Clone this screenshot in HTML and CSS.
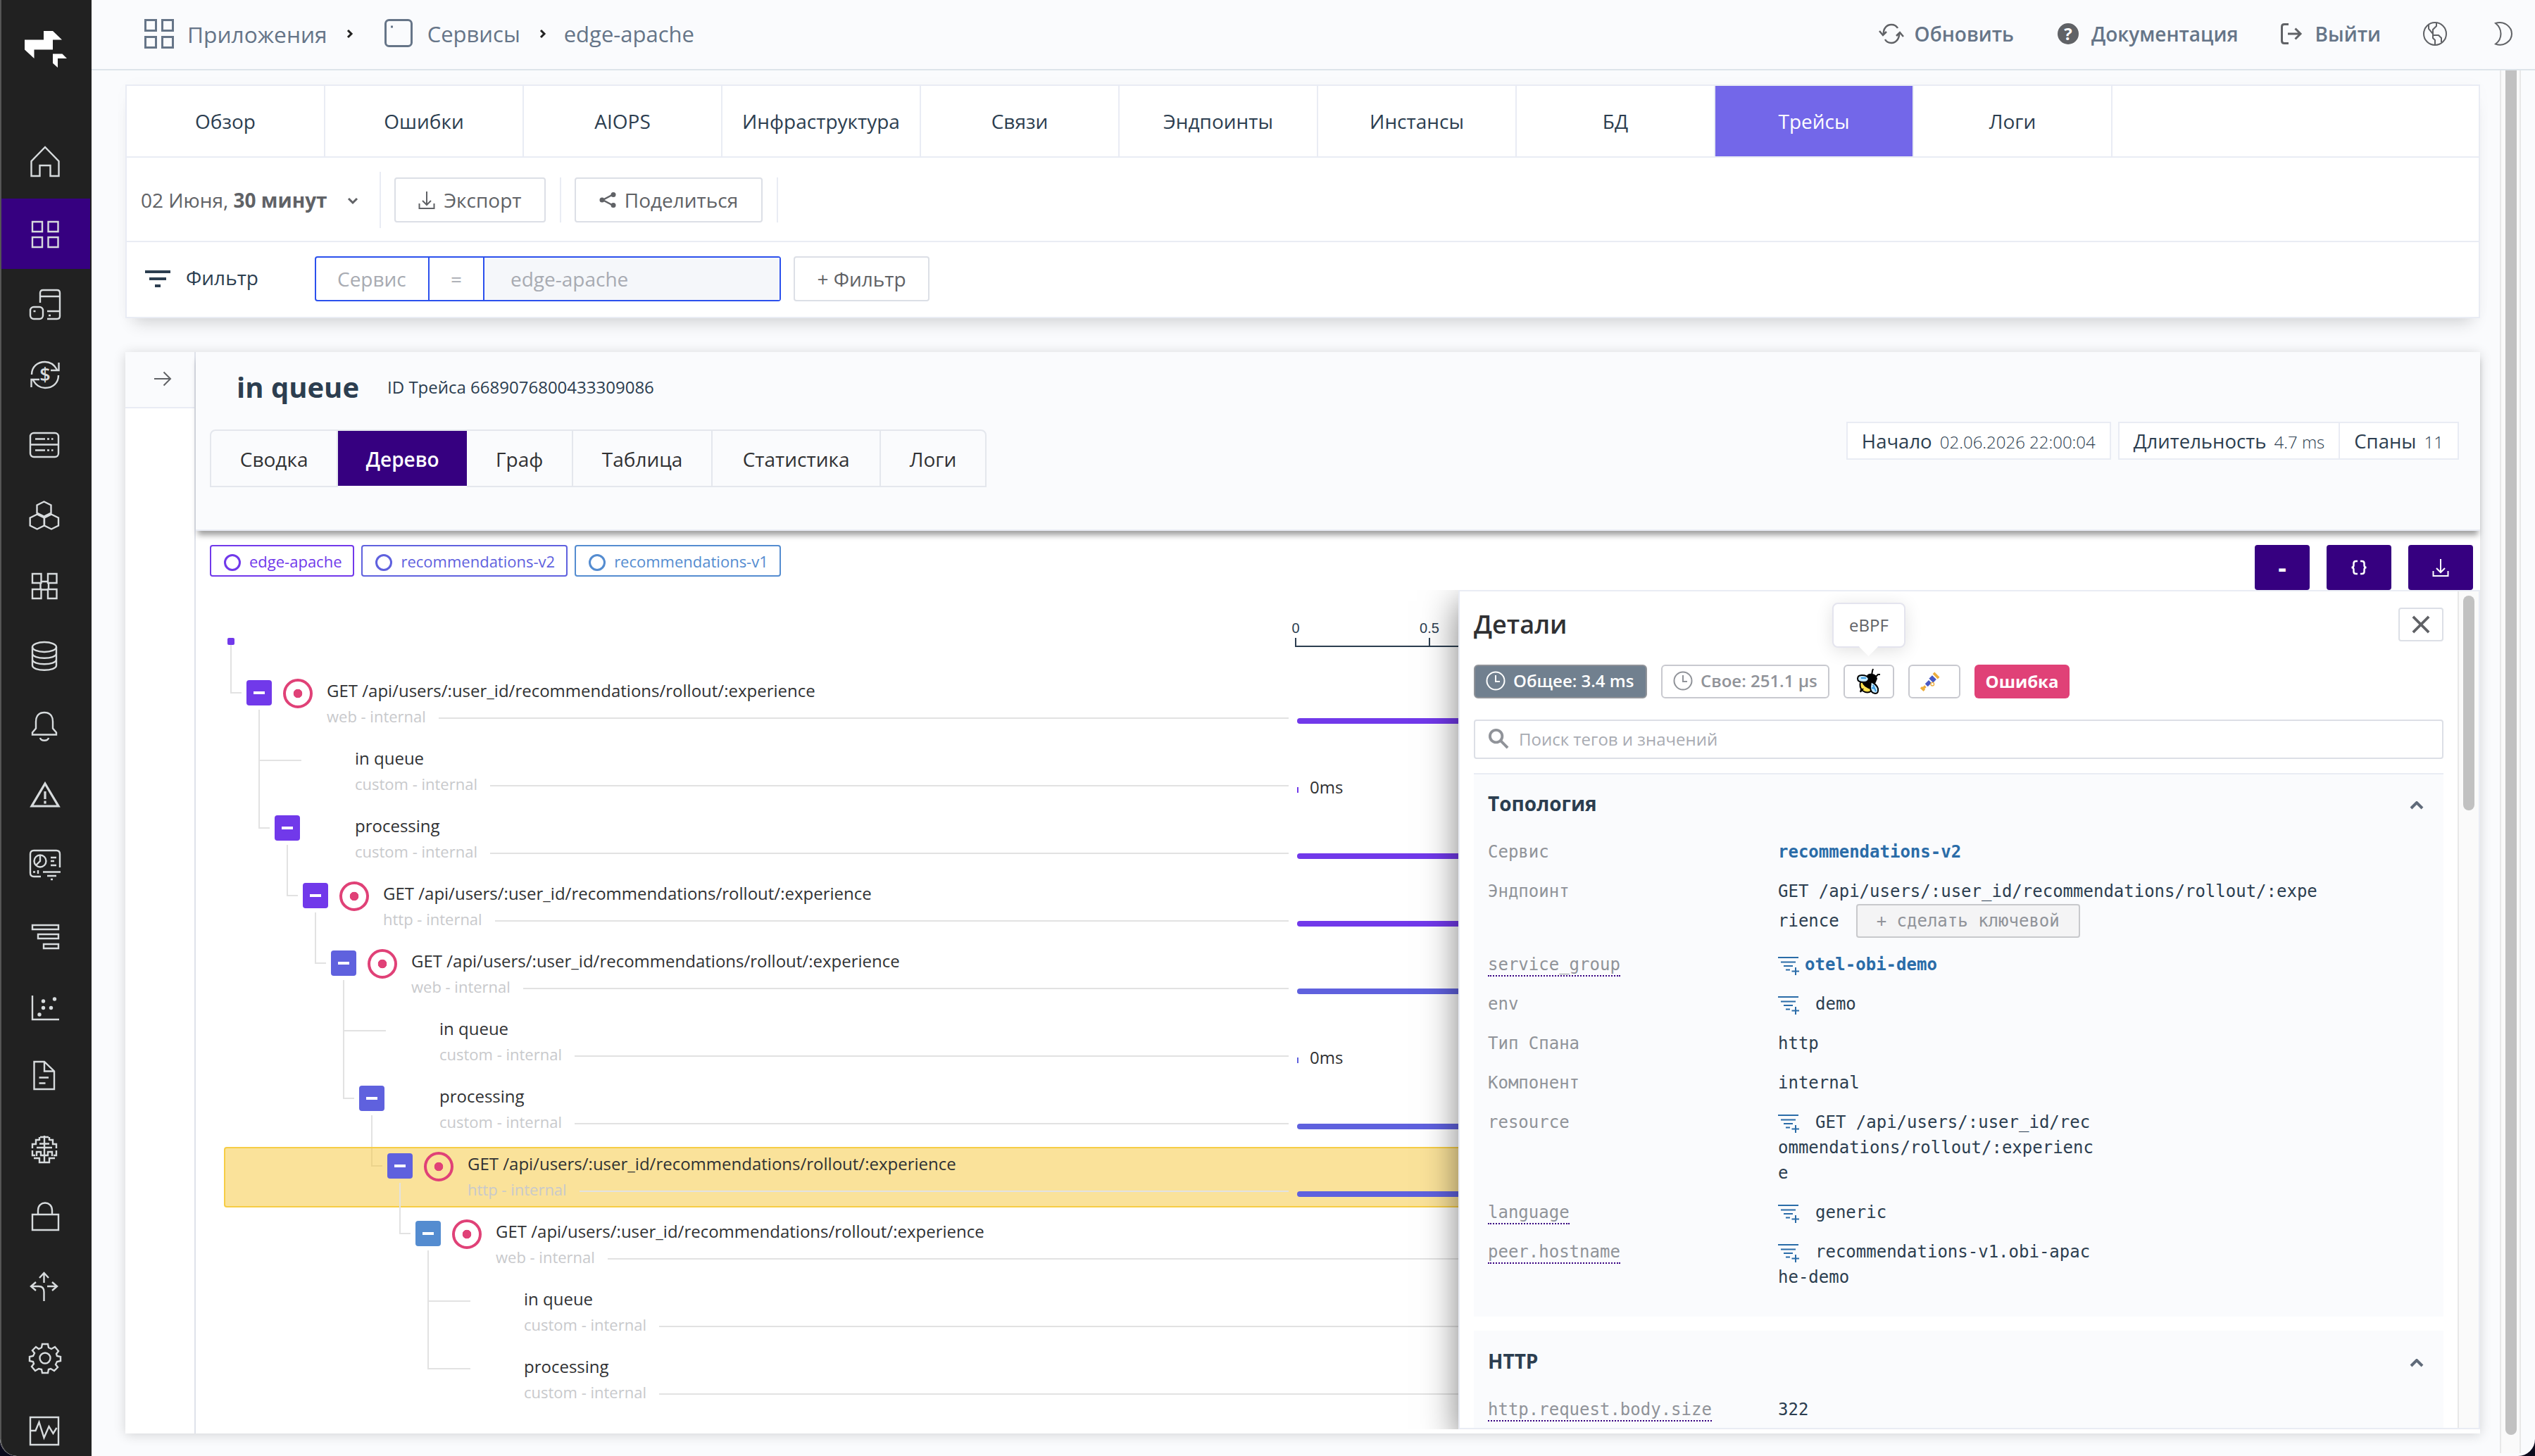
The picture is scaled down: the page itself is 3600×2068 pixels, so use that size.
FILE: index.html
```html
<!DOCTYPE html>
<html lang="ru">
<head>
  <meta charset="UTF-8">
  <meta name="viewport" content="width=device-width, initial-scale=1.0">
  <title>edge-apache - Трейсы</title>
  <link rel="stylesheet" href="styles.css">
</head>
<body>
  <!-- shared icons -->
  <svg class="defs" width="0" height="0">
    <symbol id="i-download" viewBox="0 0 24 26"><path d="M12 1v19M6 14l6 6 6-6M1.500 18v7h21v-7"/></symbol>
    <symbol id="i-clock" viewBox="0 0 28 28"><circle cx="14" cy="14" r="12.500"/><path d="M14 6v9h6"/></symbol>
    <symbol id="i-up" viewBox="0 0 20 12"><path d="M2 10l8-8 8 8"/></symbol>
    <symbol id="i-addfilter" viewBox="0 0 30 28"><path d="M0 2h29M4 8.500h21M8 14h13M11 19.500h6M25 16v11M19.500 21.500h11"/></symbol>
  </svg>

  <div class="app">
    <nav class="sidebar">
      <svg class="logo" viewBox="0 0 62 54"><path fill="#fff" d="M27 0H40L53 12.600H40V26.500H13.500V39L0 26.500V12.600H27zM40 32.500H53.500L60 39H47V52L40 45.700z"/></svg>
      <a class="nav-item"><svg viewBox="0 0 44 44"><path d="M2.500 40V19L22-1l19.500 20v21H29.500V25h-15v15z"/></svg></a>
      <a class="nav-item active"><svg viewBox="0 0 44 44"><path d="M4 5h14v14H4zM26.500 5h14v14h-14zM4 27h14v14H4zM26.500 27h14v14h-14z"/></svg></a>
      <a class="nav-item"><svg viewBox="0 0 44 44"><path d="M15 20V6q0-4 4-4h20q4 0 4 4v33q0 4-4 4H25M15 11h28M25 32h18M27 38h3M5.500 32h3"/><rect x="1" y="26" width="18" height="17" rx="5"/></svg></a>
      <a class="nav-item"><svg viewBox="0 0 44 44"><path d="M3 22C3 11 11 4 22 4c8 0 13 4 17 11M41.500 5v11H30M41 23c0 11-8 18-19 18-8 0-13-4-17-11M2.500 40V29H14"/><text class="dollar" x="22" y="32">$</text></svg></a>
      <a class="nav-item"><svg viewBox="0 0 44 44"><rect x="1" y="5" width="40" height="34" rx="5"/><path d="M1 21.500h40M8 13.500h14M25 13.500h3M31 13.500h2.500M8 29.500h14M25 29.500h3M31 29.500h2.500"/></svg></a>
      <a class="nav-item"><svg viewBox="0 0 44 44"><path d="M20.500 2.500l10 5v11l-10 5-10-5v-11zM10.700 20.500l10 5v11l-10 5-10-5v-11zM31 20.500l10 5v11l-10 5-10-5v-11z"/></svg></a>
      <a class="nav-item"><svg viewBox="0 0 44 44"><path d="M4 5h12.500v13H4zM26 5h12.500v13H26zM4 27h12.500v13H4zM26 27h12.500v13H26zM16.500 16H26M16.500 27.500H26M15.500 18v9M27 18v9"/></svg></a>
      <a class="nav-item"><svg viewBox="0 0 44 44"><ellipse cx="21" cy="9" rx="17" ry="7"/><path d="M4 9v26c0 9 34 9 34 0V9M4 18c0 9 34 9 34 0M4 26.500c0 9 34 9 34 0"/></svg></a>
      <a class="nav-item"><svg viewBox="0 0 44 44"><path d="M4 33.500v-3l5-6V15C9 6 14 2 21 2s12 4 12 13v9.500l5 6v3zM15 38c1 5 11 5 12 0"/></svg></a>
      <a class="nav-item"><svg viewBox="0 0 44 44"><path class="thick" d="M22 3l19 32H3z"/><path class="thick" d="M22 14v11M22 27.500v4"/></svg></a>
      <a class="nav-item"><svg viewBox="0 0 44 44"><path d="M16 35H6q-5 0-5-5V3q0-5 5-5h32q5 0 5 5v19M19 28.500h25M5 28.500h3M12 26v5M25 34h13M30 39h3M30 8h8M30 13h5M30 19h8"/><circle cx="15" cy="13" r="8.500"/><path d="M15 4.500V13l-6 6"/></svg></a>
      <a class="nav-item"><svg viewBox="0 0 44 44"><path d="M4 4h37v6H4zM12 17h29v6H12zM20 31h21v6H20z"/></svg></a>
      <a class="nav-item"><svg viewBox="0 0 44 44"><path d="M4 4v34h38"/><g class="dots"><circle cx="19.500" cy="12" r="2.700"/><circle cx="35.500" cy="9" r="2.700"/><circle cx="19.500" cy="21.500" r="2.700"/><circle cx="30.500" cy="21.500" r="2.700"/><circle cx="14" cy="31" r="2.700"/></g></svg></a>
      <a class="nav-item"><svg viewBox="0 0 44 44"><path d="M6.500-2H21l14 13.500V37H6.500zM21-2v13.500h14M13.500 20.500H27M13.500 28.500h9"/></svg></a>
      <a class="nav-item"><svg viewBox="0 0 44 44"><path d="M21 3v39M14 5v5M15 5h6M14 9H9v6H4v6M10 20h11M14 14.500h7M4 24v7h4M10 32v-6h6v5h5M6 35h8v6h7M28 5v5M27 5h-6M28 9h5v6h5v6M32 20H21M28 14.500h-7M38 24v7h-4M32 32v-6h-6v5h-5M36 35h-8v6h-7"/></svg></a>
      <a class="nav-item"><svg viewBox="0 0 44 44"><path d="M4 15h37v22H4zM12 15V9C12-5 32-5 32 9v6"/></svg></a>
      <a class="nav-item"><svg viewBox="0 0 44 44"><path d="M20.500 12V-2M14 5l6.500-7L27 5M9 11l-7 6 7 6M3 17h10q7.500 0 7.500 8v13M25 17h14M32 11l7 6-7 6"/></svg></a>
      <a class="nav-item"><svg viewBox="0 0 44 44"><path d="M18-1h8l1 5 4 2 5-3 5 6-3 4 1 3 5 1v6l-5 1-2 4 3 4-5 5-5-3-3 1-1 5h-8l-1-5-4-1-5 3-5-6 3-4-1-3-5-1v-6l5-1 2-4-3-4 5-5 4 3 4-2z"/><circle cx="22" cy="19" r="7.500"/></svg></a>
      <a class="nav-item"><svg viewBox="0 0 44 44"><path d="M1 3h40v39H1zM1 22h7.500L13.500 10l7 22 7-16 6 10 5-8"/></svg></a>
    </nav>

    <div class="page">
      <header class="topbar">
        <div class="crumbs">
          <svg class="crumb-apps" viewBox="0 0 42 42"><path d="M1.500 1.500h15v15h-15zM25.500 1.500h15v15h-15zM1.500 25.500h15v15h-15zM25.500 25.500h15v15h-15z"/></svg>
          <span class="crumb strong">Приложения</span>
          <svg class="crumb-arrow" viewBox="0 0 10 14"><path d="M2 2l5 5-5 5"/></svg>
          <svg class="crumb-doc" viewBox="0 0 40 40"><rect x="1.500" y="1.500" width="37" height="37" rx="5"/><path d="M9 11h3"/></svg>
          <span class="crumb">Сервисы</span>
          <svg class="crumb-arrow" viewBox="0 0 10 14"><path d="M2 2l5 5-5 5"/></svg>
          <span class="crumb">edge-apache</span>
        </div>
        <div class="actions">
          <a class="action refresh"><svg class="ic-refresh" viewBox="0 0 36 30"><path d="M7 16C6 8 11 2 18 2c4 0 7 1.500 9 5M1 11l5 6 5-5M29 13c1 8-4 15-11 15-4 0-7-1.500-9-5M35 19l-5-6-5 5"/></svg>Обновить</a>
          <a class="action"><span class="ic-help">?</span>Документация</a>
          <a class="action"><svg class="ic-exit" viewBox="0 0 30 30"><path d="M11 1.500H5Q1.500 1.500 1.500 5v20q0 3.500 3.500 3.500h6M10 15h18M20.500 7.500L28 15l-7.500 7.500"/></svg>Выйти</a>
          <svg class="ic-globe" viewBox="0 0 34 34"><circle cx="17" cy="17" r="16"/><path d="M8 4v6l6 7M19 1v5l-5 5v12l3 3v7M14 19h8l4 4v6"/></svg>
          <svg class="ic-moon" viewBox="0 0 26 34"><path d="M2 2c12-4 23 5 23 15S14 36 2 31.500C12 24 12 10 2 2z"/></svg>
        </div>
      </header>

      <div class="content">
        <main class="main">
          <section class="card">
            <div class="tabs">
              <a class="tab">Обзор</a>
              <a class="tab">Ошибки</a>
              <a class="tab">AIOPS</a>
              <a class="tab">Инфраструктура</a>
              <a class="tab">Связи</a>
              <a class="tab">Эндпоинты</a>
              <a class="tab">Инстансы</a>
              <a class="tab">БД</a>
              <a class="tab active">Трейсы</a>
              <a class="tab">Логи</a>
            </div>
            <div class="toolbar">
              <div class="date">02 Июня, <b>30 минут</b><svg viewBox="0 0 16 12"><path d="M2 2l6 6 6-6"/></svg></div>
              <div class="tool"><button class="btn export"><svg viewBox="0 0 24 26"><use href="#i-download"/></svg>Экспорт</button></div>
              <div class="tool"><button class="btn share"><svg viewBox="0 0 24 22"><path d="M20 3L5 11l15 8"/><circle cx="20" cy="3.500" r="3.500"/><circle cx="4" cy="11" r="3.500"/><circle cx="20" cy="18.500" r="3.500"/></svg>Поделиться</button></div>
            </div>
            <div class="filter">
              <svg class="filter-icon" viewBox="0 0 36 24"><path d="M0 2h36M6 12h24M14 22h8"/></svg>
              <span class="filter-label">Фильтр</span>
              <div class="filter-group">
                <span class="f-key">Сервис</span>
                <span class="f-op">=</span>
                <span class="f-value">edge-apache</span>
              </div>
              <button class="btn add">+ Фильтр</button>
            </div>
          </section>

          <section class="trace">
            <div class="rail">
              <div class="rail-btn"><svg viewBox="0 0 26 22"><path d="M1 11h23M14.500 1.500L24 11l-9.500 9.500"/></svg></div>
            </div>
            <div class="trace-main">
              <div class="trace-head">
                <div class="head-left">
                  <div class="title"><h1>in queue</h1><span>ID Трейса 6689076800433309086</span></div>
                  <div class="views">
                    <a class="view">Сводка</a>
                    <a class="view active">Дерево</a>
                    <a class="view">Граф</a>
                    <a class="view">Таблица</a>
                    <a class="view wide">Статистика</a>
                    <a class="view">Логи</a>
                  </div>
                </div>
                <div class="meta">
                  <div class="meta-box"><span>Начало <small>02.06.2026 22:00:04</small></span></div>
                  <div class="meta-box"><span>Длительность <small>4.7 ms</small></span><span>Спаны <small>11</small></span></div>
                </div>
              </div>

              <div class="legend">
                <span class="chip c1"><i></i>edge-apache</span>
                <span class="chip c2"><i></i>recommendations-v2</span>
                <span class="chip c3"><i></i>recommendations-v1</span>
                <div class="legend-btns">
                  <button class="pbtn minus">-</button>
                  <button class="pbtn"><svg viewBox="0 0 24 20"><path d="M10 1H8Q4.500 1 4.500 4v3q0 3-3 3 3 0 3 3v3q0 3 3.500 3h2M14 1h2q3.500 0 3.500 3v3q0 3 3 3-3 0-3 3v3q0 3-3.500 3h-2"/></svg></button>
                  <button class="pbtn"><svg class="dl" viewBox="0 0 24 26"><use href="#i-download"/></svg></button>
                </div>
              </div>

              <div class="trace-body">
                <div class="tree">
                  <div class="tree-head">
                    <span class="root-dot"></span>
                    <svg class="axis" viewBox="0 0 400 46"><path d="M11 26v12h400M201 26v12"/><text x="11" y="19">0</text><text x="201" y="19">0.5</text></svg>
                  </div>
                  <div class="row l0 first">
                    <span class="toggle c1"></span><span class="mark on"></span>
                    <div class="label"><div class="name">GET /api/users/:user_id/recommendations/rollout/:experience</div><div class="kind">web - internal</div></div>
                    <span class="bar c1"></span>
                  </div>
                  <div class="row l1">
                    <span class="toggle none"></span><span class="mark"></span>
                    <div class="label"><div class="name">in queue</div><div class="kind">custom - internal</div></div>
                    <span class="tick"><i class="c1"></i>0ms</span>
                  </div>
                  <div class="row l1 second">
                    <span class="toggle c1"></span><span class="mark"></span>
                    <div class="label"><div class="name">processing</div><div class="kind">custom - internal</div></div>
                    <span class="bar c1"></span>
                  </div>
                  <div class="row l2">
                    <span class="toggle c1"></span><span class="mark on"></span>
                    <div class="label"><div class="name">GET /api/users/:user_id/recommendations/rollout/:experience</div><div class="kind">http - internal</div></div>
                    <span class="bar c1"></span>
                  </div>
                  <div class="row l3">
                    <span class="toggle c2"></span><span class="mark on"></span>
                    <div class="label"><div class="name">GET /api/users/:user_id/recommendations/rollout/:experience</div><div class="kind">web - internal</div></div>
                    <span class="bar c2"></span>
                  </div>
                  <div class="row l4">
                    <span class="toggle none"></span><span class="mark"></span>
                    <div class="label"><div class="name">in queue</div><div class="kind">custom - internal</div></div>
                    <span class="tick"><i class="c2"></i>0ms</span>
                  </div>
                  <div class="row l4 second">
                    <span class="toggle c2"></span><span class="mark"></span>
                    <div class="label"><div class="name">processing</div><div class="kind">custom - internal</div></div>
                    <span class="bar c2"></span>
                  </div>
                  <div class="row l5 selected">
                    <span class="toggle c2"></span><span class="mark on"></span>
                    <div class="label"><div class="name">GET /api/users/:user_id/recommendations/rollout/:experience</div><div class="kind">http - internal</div></div>
                    <span class="bar c2"></span>
                  </div>
                  <div class="row l6">
                    <span class="toggle c3"></span><span class="mark on"></span>
                    <div class="label"><div class="name">GET /api/users/:user_id/recommendations/rollout/:experience</div><div class="kind">web - internal</div></div>
                  </div>
                  <div class="row l7">
                    <span class="toggle none"></span><span class="mark"></span>
                    <div class="label"><div class="name">in queue</div><div class="kind">custom - internal</div></div>
                  </div>
                  <div class="row l7 second">
                    <span class="toggle none"></span><span class="mark"></span>
                    <div class="label"><div class="name">processing</div><div class="kind">custom - internal</div></div>
                  </div>
                </div>

                <aside class="details">
                  <div class="details-inner">
                    <div class="details-head">
                      <h2>Детали</h2>
                      <button class="close"><svg viewBox="0 0 28 28"><path d="M2 2l24 24M26 2L2 26"/></svg></button>
                    </div>
                    <div class="badges">
                      <span class="badge total"><svg viewBox="0 0 28 28"><use href="#i-clock"/></svg>Общее: 3.4 ms</span>
                      <span class="badge own"><svg viewBox="0 0 28 28"><use href="#i-clock"/></svg>Свое: 251.1 μs</span>
                      <span class="badge bee">
                        <svg viewBox="0 0 36 38">
                          <path d="M22 10l1-6 1-3M28 12l3-3 3 0" fill="none" stroke="#000" stroke-width="2"/>
                          <path d="M15 11Q17 7 23 8q6 1 7 7l-3 7-9-2z" fill="#000"/>
                          <path d="M6 20q8-4 14 0l2 12q-6 5-13 0-5-5-3-12z" fill="#ffe14d" stroke="#000" stroke-width="2"/>
                          <path d="M9 19q2 8 13 10l-1-5-7-7zM6 34l3-4h-2z" fill="#000" stroke="#000"/>
                          <path d="M2 15q0-5 6-5 8 0 10 5-1 5-7 5-9 0-9-5z" fill="#c5e9ff" stroke="#000" stroke-width="2"/>
                          <path d="M21 19q8 4 10 10 1 7-4 7-7-1-7-9z" fill="#c5e9ff" stroke="#000" stroke-width="2"/>
                          <path d="M7 14h7M24 24l4 9M22 28l5 1" stroke="#3a9be0" fill="none"/>
                        </svg>
                        <span class="tooltip">eBPF</span>
                      </span>
                      <span class="badge scope">
                        <svg viewBox="0 0 28 28"><g transform="rotate(-45 14 14)"><path d="M25 8.500h4v11h-4z" fill="#edae3c"/><path d="M16 9.500h7v9h-7zM6 11h8v6H6z" fill="#4859c4"/><path d="M-3 11.500h2v1.500h4v2h-4v1.500h-2z" fill="#edae3c" stroke="#edae3c"/></g><circle cx="17.500" cy="18" r="2.500" fill="#fff" stroke="#edae3c" stroke-width="1.500"/></svg>
                      </span>
                      <span class="badge error">Ошибка</span>
                    </div>
                    <div class="search"><svg viewBox="0 0 30 30"><circle cx="11" cy="11" r="9"/><path d="M18 18l10 10"/></svg>Поиск тегов и значений</div>

                    <div class="group">
                      <div class="group-head"><h3>Топология</h3><svg viewBox="0 0 20 12"><use href="#i-up"/></svg></div>
                      <dl class="props">
                        <dt>Сервис</dt><dd><a>recommendations-v2</a></dd>
                        <dt>Эндпоинт</dt><dd>GET /api/users/:user_id/recommendations/rollout/:expe<div class="second-line">rience<button class="key-btn">+ сделать ключевой</button></div></dd>
                        <dt><u>service_group</u></dt><dd><svg class="tight" viewBox="0 0 30 28"><use href="#i-addfilter"/></svg><a>otel-obi-demo</a></dd>
                        <dt>env</dt><dd><svg viewBox="0 0 30 28"><use href="#i-addfilter"/></svg>demo</dd>
                        <dt>Тип Спана</dt><dd>http</dd>
                        <dt>Компонент</dt><dd>internal</dd>
                        <dt>resource</dt><dd><svg viewBox="0 0 30 28"><use href="#i-addfilter"/></svg>GET /api/users/:user_id/rec<br>ommendations/rollout/:experienc<br>e</dd>
                        <dt><u>language</u></dt><dd><svg viewBox="0 0 30 28"><use href="#i-addfilter"/></svg>generic</dd>
                        <dt><u>peer.hostname</u></dt><dd><svg viewBox="0 0 30 28"><use href="#i-addfilter"/></svg>recommendations-v1.obi-apac<br>he-demo</dd>
                      </dl>
                    </div>
                    <div class="group">
                      <div class="group-head"><h3>HTTP</h3><svg viewBox="0 0 20 12"><use href="#i-up"/></svg></div>
                      <dl class="props">
                        <dt><u>http.request.body.size</u></dt><dd>322</dd>
                      </dl>
                    </div>
                  </div>
                  <div class="inner-scroll"><span></span></div>
                </aside>
              </div>
            </div>
          </section>
        </main>
        <div class="page-scroll"><span></span></div>
      </div>
    </div>
  </div>
</body>
</html>
```
FILE: styles.css
```css
*, *::before, *::after {
  box-sizing: border-box;
}
body {
  margin: 0;
  width: 3600px;
  height: 2068px;
  overflow: hidden;
  background: #0b0a1c;
  font-family: "Open Sans", "Noto Sans", sans-serif;
  font-size: 28px;
  color: #2c3e50;
}
h1, h2, h3, dl, dd {
  margin: 0;
}
button {
  font: inherit;
  margin: 0;
}
svg {
  display: block;
  flex: none;
  fill: none;
  stroke: currentColor;
  stroke-width: 2;
  overflow: visible;
}
.defs {
  position: absolute;
}
.app {
  display: flex;
  height: 2068px;
  overflow: hidden;
  border-radius: 0 0 24px 24px;
  background: #fafbfd;
}

/* sidebar */
.sidebar {
  width: 130px;
  flex: none;
  height: 2068px;
  overflow: hidden;
  background: #212121;
  border-left: 2px solid #555;
  border-radius: 0 0 0 24px;
}
.logo {
  width: 62px;
  height: 54px;
  margin: 44px 0 84px 33px;
  stroke: none;
}
.nav-item {
  display: flex;
  align-items: center;
  width: 126px;
  height: 100px;
  padding-left: 40px;
  color: #d7dbdd;
}
.nav-item.active {
  background: #360080;
}
.nav-item svg {
  width: 44px;
  height: 44px;
  stroke-width: 2.4;
}
.nav-item .thick {
  stroke-width: 3.2;
}
.dots {
  fill: currentColor;
  stroke: none;
}
.dollar {
  fill: currentColor;
  stroke: none;
  font-size: 27px;
  font-weight: 600;
  text-anchor: middle;
}

/* top bar */
.page {
  flex: 1;
  min-width: 0;
}
.topbar {
  display: flex;
  justify-content: space-between;
  height: 100px;
  border-bottom: 2px solid #dde4ea;
  padding: 0 32px 2px 74px;
}
.crumbs, .actions, .action {
  display: flex;
  align-items: center;
}
.crumbs {
  color: #667588;
  font-size: 31px;
}
.crumbs svg {
  stroke-width: 3;
}
.crumb-apps {
  width: 42px;
  height: 42px;
  margin: 0 19px 0 1px;
}
.crumb.strong {
  font-weight: 500;
  font-size: 31.700px;
}
.crumb-arrow {
  width: 10px;
  height: 14px;
  margin: 0 25px 0 27px;
  color: #222;
}
.crumb-doc {
  width: 40px;
  height: 40px;
  margin: 0 21px 2px 19px;
}
.actions {
  color: #606266;
}
.action {
  color: #667588;
  font-weight: 600;
  margin-right: 60px;
}
.action.refresh {
  margin-right: 62px;
}
.action svg {
  color: #606266;
}
.ic-refresh {
  width: 36px;
  height: 30px;
  margin-right: 15px;
  stroke-width: 2.5;
}
.ic-help {
  width: 30px;
  height: 30px;
  border-radius: 50%;
  background: #606266;
  color: #fff;
  font-size: 24px;
  font-weight: 700;
  line-height: 29px;
  text-align: center;
  margin-right: 18px;
}
.ic-exit {
  width: 30px;
  height: 30px;
  margin-right: 19px;
  stroke-width: 3;
}
.ic-globe {
  width: 34px;
  height: 34px;
  margin-right: 67px;
}
.ic-moon {
  width: 26px;
  height: 34px;
}

.content {
  display: flex;
  height: 1968px;
}
.main {
  flex: 1;
  padding: 20px 28px 0 48px;
}
.page-scroll {
  width: 30px;
  height: 1964px;
  margin-right: 20px;
  background: #fafafa;
  border: solid #e8e8e8;
  border-width: 0 2px;
}
.page-scroll span {
  display: block;
  width: 16px;
  height: 1938px;
  margin-left: 6px;
  border-radius: 0 0 8px 8px;
  background: #c1c1c1;
}

/* filter card */
.card {
  height: 332px;
  background: #fff;
  border: 2px solid #e9ecf4;
  box-shadow: 0 18px 22px -12px rgba(0, 0, 0, 0.16), 0 0 24px rgba(0, 0, 0, 0.02);
}
.tabs {
  display: flex;
  height: 102px;
  border-bottom: 2px solid #e9ecf4;
}
.tab {
  width: 282px;
  line-height: 100px;
  text-align: center;
  border-right: 2px solid #e9ecf4;
}
.tab.active {
  background: #7367e9;
  color: #fff;
}
.toolbar {
  display: flex;
  align-items: center;
  height: 120px;
  padding: 2px 0 0 20px;
  border-bottom: 2px solid #e9ecf4;
  color: #606266;
}
.date {
  display: flex;
  align-items: center;
  white-space: pre;
  width: 341px;
  height: 80px;
  border-right: 2px solid #e9ecf4;
  font-weight: 500;
}
.date b {
  font-weight: 700;
}
.date svg {
  width: 16px;
  height: 12px;
  margin: 4px 0 0 28px;
  stroke-width: 3;
}
.tool {
  padding: 0 20px 0 19px;
  border-right: 2px solid #e9ecf4;
}
.btn {
  display: flex;
  align-items: center;
  height: 64px;
  padding: 0;
  justify-content: center;
  background: #fff;
  border: 2px solid #dcdfe6;
  border-radius: 4px;
  color: #606266;
  font-weight: 500;
}
.btn svg {
  width: 24px;
  margin-right: 12px;
}
.export {
  width: 215px;
}
.share {
  width: 267px;
}
.share circle {
  fill: currentColor;
  stroke: none;
}
.share svg {
  stroke-width: 2.5;
}
.filter {
  display: flex;
  align-items: center;
  height: 106px;
  padding-left: 26px;
  padding-bottom: 2px;
}
.filter-icon {
  width: 36px;
  height: 24px;
  stroke-width: 4;
}
.filter-label {
  width: 183px;
  margin-left: 22px;
  padding-bottom: 4px;
}
.filter-group {
  display: flex;
  width: 662px;
  height: 64px;
  border: 2px solid #2b50ed;
  border-radius: 4px;
  line-height: 60px;
  color: #a8abb2;
}
.f-key {
  width: 161px;
  padding-left: 30px;
  border-right: 2px solid #2b50ed;
}
.f-op {
  width: 78px;
  text-align: center;
  border-right: 2px solid #2b50ed;
}
.f-value {
  flex: 1;
  padding-left: 37px;
  background: #f5f7fa;
}
.add {
  width: 193px;
  margin-left: 18px;
}

/* trace panel */
.trace {
  display: flex;
  height: 1536px;
  margin-top: 48px;
  background: #fff;
  box-shadow: 0 2px 16px rgba(0, 0, 0, 0.16);
}
.rail {
  width: 100px;
  border-right: 2px solid #dfe2ea;
}
.rail-btn {
  display: flex;
  align-items: center;
  justify-content: center;
  height: 80px;
  padding: 0 0 2px 8px;
  background: #fafbfd;
  border-bottom: 2px solid #e9ecf4;
  color: #606266;
}
.rail-btn svg {
  width: 26px;
  height: 22px;
}
.trace-main {
  flex: 1;
  min-width: 0;
}
.trace-head {
  display: flex;
  justify-content: space-between;
  height: 254px;
  padding: 0 30px 0 20px;
  background: #fafbfd;
  border-bottom: 2px solid #e9ecf4;
  box-shadow: 0 9px 8px -3px rgba(0, 0, 0, 0.38);
}
.title {
  display: flex;
  align-items: center;
  height: 98px;
  margin-bottom: 12px;
  padding-left: 38px;
}
.title h1 {
  font-size: 40px;
  font-weight: 700;
}
.title span {
  font-size: 24px;
  margin: 1px 0 0 40px;
}
.views {
  display: inline-flex;
  height: 82px;
  border: 2px solid #e4e7ed;
  border-radius: 8px 8px 0 0;
  color: #303133;
  font-weight: 500;
}
.view {
  padding: 0 40.800px;
  line-height: 80px;
  border-right: 2px solid #e4e7ed;
}
.view:last-child {
  border-right: none;
}
.view.wide {
  padding: 0 42.500px;
}
.view.active {
  height: 78px;
  padding: 0 39.500px;
  background: #360080;
  color: #fff;
  font-weight: 600;
  border-right: none;
  box-shadow: 0 2px 0 #fff;
}
.meta {
  display: flex;
  gap: 10px;
  margin-top: 99px;
  height: 54px;
}
.meta-box {
  display: flex;
  background: #fff;
  border: 2px solid #e9ecf4;
}
.meta-box span {
  padding: 0 20px 0 20px;
  line-height: 51px;
  font-size: 27.500px;
  font-weight: 500;
  white-space: nowrap;
}
.meta-box span + span {
  border-left: 2px solid #e9ecf4;
}
.meta-box small {
  font-size: 24px;
  font-weight: 300;
  margin-left: 4px;
}
.legend {
  display: flex;
  gap: 10px;
  height: 84px;
  padding: 20px 10px 0 20px;
}
.c1 {
  color: #7139ea;
}
.c2 {
  color: #5f61de;
}
.c3 {
  color: #548cd0;
}
.chip {
  display: flex;
  align-items: center;
  height: 45px;
  padding: 0 16px 0 18px;
  border: 2px solid currentColor;
  border-radius: 4px;
  font-size: 22px;
}
.chip i {
  width: 24px;
  height: 24px;
  margin: 4px 12px 0 0;
  border: 3px solid currentColor;
  border-radius: 50%;
}
.legend-btns {
  display: flex;
  gap: 24px;
  margin-left: auto;
}
.pbtn {
  display: flex;
  align-items: center;
  justify-content: center;
  width: 92px;
  height: 64px;
  padding: 0;
  border: none;
  border-radius: 4px;
  background: #360080;
  color: #fff;
}
.pbtn.minus {
  width: 78px;
  padding-bottom: 2px;
  font-size: 36px;
  font-weight: 700;
}
.pbtn svg {
  width: 24px;
  height: 20px;
  stroke-width: 2.5;
}
.pbtn .dl {
  height: 26px;
  stroke-width: 2;
}

/* span tree */
.trace-body {
  position: relative;
  height: 1192px;
  overflow: hidden;
}
.tree-head {
  display: flex;
  height: 98px;
}
.root-dot {
  width: 10px;
  height: 10px;
  margin: 68px 0 0 45px;
  border-radius: 2px;
  background: #7139ea;
}
.axis {
  width: 400px;
  height: 46px;
  margin: 42px 0 0 1496px;
  color: #2c3e50;
}
.axis text {
  font-family: "Liberation Sans", Arial, sans-serif;
  font-size: 20px;
  fill: #2c3e50;
  stroke: none;
  text-anchor: middle;
}
.row {
  --x: calc(72px + var(--lvl) * 40px);
  position: relative;
  display: flex;
  height: 96px;
  padding-left: var(--x);
}
.l0 { --lvl: 0; }
.l1 { --lvl: 1; }
.l2 { --lvl: 2; }
.l3 { --lvl: 3; }
.l4 { --lvl: 4; }
.l5 { --lvl: 5; }
.l6 { --lvl: 6; }
.l7 { --lvl: 7; }
/* elbow connector up to the parent toggle */
.row::before {
  content: "";
  position: absolute;
  left: calc(var(--x) - 23px);
  bottom: 47px;
  width: 16px;
  height: 73px;
  border: solid #e2e2e2;
  border-width: 0 0 2px 2px;
}
.row.first::before {
  height: 69px;
}
.row.second::before {
  height: 169px;
}
.row:has(.none)::before {
  width: 61px;
}
.row.selected::after {
  content: "";
  position: absolute;
  left: 40px;
  top: 21px;
  width: 1800px;
  height: 86px;
  background: rgba(245, 198, 53, 0.5);
  border: 2px solid #f6cd45;
  border-radius: 4px;
}
.row > * {
  position: relative;
  z-index: 1;
}
.toggle {
  display: flex;
  align-items: center;
  justify-content: center;
  flex: none;
  width: 36px;
  height: 36px;
  margin-top: 30px;
  border-radius: 4px;
  background: currentColor;
}
.toggle::after {
  content: "";
  width: 16px;
  height: 4px;
  background: #fff;
}
.toggle.none {
  visibility: hidden;
}
.mark {
  flex: none;
  width: 42px;
  height: 42px;
  margin: 28px 20px 0 16px;
}
.mark.on {
  border: 4px solid #e04177;
  border-radius: 50%;
  background: radial-gradient(circle, #e04177 6px, transparent 6.6px);
}
.label {
  width: calc(1366px - var(--lvl) * 40px);
  flex: none;
  padding-top: 27px;
}
.label:last-child {
  width: auto;
  flex: 1;
}
.name {
  font-size: 24px;
  line-height: 36px;
  color: #303133;
  white-space: nowrap;
}
.kind {
  display: flex;
  line-height: 36px;
  font-size: 22px;
  color: #c8c9cc;
  white-space: nowrap;
}
.kind::after {
  content: "";
  flex: 1;
  height: 2px;
  margin: 20px 0 0 18px;
  background: #e2e2e2;
}
.bar {
  flex: 1;
  height: 8px;
  margin: 84px 0 0 12px;
  border-radius: 4px;
  background: currentColor;
}
.tick {
  margin: 68px 0 0 12px;
  height: 36px;
  line-height: 36px;
  font-size: 24px;
  color: #303133;
}
.tick i {
  display: inline-block;
  width: 2px;
  height: 8px;
  margin-right: 16px;
  vertical-align: 1px;
  background: currentColor;
}

/* details drawer over the tree */
.details {
  position: absolute;
  left: 1793px;
  top: 0;
  width: 1451px;
  height: 1192px;
  display: flex;
  overflow: visible;
  background: #fff;
  border: 2px solid #e9ecf4;
  box-shadow: 0 16px 48px rgba(0, 0, 0, 0.5);
  z-index: 2;
}
.details-inner {
  flex: 1;
  height: 1188px;
  padding: 0 20px;
  overflow: hidden;
}
.inner-scroll {
  width: 30px;
  padding: 6px 0 0 6px;
  background: #fafafa;
  border-left: 2px solid #e8e8e8;
}
.inner-scroll span {
  display: block;
  width: 16px;
  height: 305px;
  border-radius: 8px;
  background: #c1c1c1;
}
.details-head {
  display: flex;
  justify-content: space-between;
  height: 104px;
}
.details-head h2 {
  margin-top: 23px;
  font-size: 36px;
  font-weight: 600;
  line-height: 48px;
  color: #303133;
}
.close {
  display: flex;
  align-items: center;
  justify-content: center;
  width: 64px;
  height: 48px;
  margin-top: 23px;
  padding: 0;
  background: #fff;
  border: 2px solid #dcdfe6;
  border-radius: 4px;
  color: #606266;
}
.close svg {
  width: 26px;
  height: 26px;
  stroke-width: 4;
}
.badges {
  display: flex;
  gap: 20px;
  height: 48px;
  font-size: 24px;
  font-weight: 600;
}
.badge {
  display: flex;
  align-items: center;
  border: 2px solid #c8c9cf;
  border-radius: 6px;
  color: #909399;
  white-space: nowrap;
}
.badge svg {
  width: 28px;
  height: 28px;
  margin: 0 11px 0 15px;
}
.badge.total, .badge.own {
  padding-bottom: 3px;
}
.badge.total {
  width: 246px;
  background: #71808f;
  border-color: #909399;
  color: #fff;
}
.badge.own {
  width: 239px;
}
.badge.bee {
  position: relative;
  width: 72px;
}
.badge.bee svg {
  width: 36px;
  height: 38px;
  margin: 0 0 0 16px;
  stroke: none;
}
.badge.scope {
  width: 74px;
}
.badge.scope svg {
  width: 26px;
  height: 26px;
  margin: 0 0 0 16px;
  stroke: none;
}
.badge.error {
  width: 135px;
  padding-bottom: 2px;
  justify-content: center;
  background: #e04177;
  border: none;
  color: #fff;
  font-weight: 700;
}
.tooltip {
  position: absolute;
  left: -18px;
  top: -90px;
  width: 104px;
  height: 64px;
  background: #fff;
  border: 2px solid #e4e4ee;
  border-radius: 8px;
  box-shadow: 0 4px 24px rgba(0, 0, 0, 0.12);
  color: #606266;
  font-weight: 400;
  line-height: 60px;
  text-align: center;
}
.tooltip::after {
  content: "";
  position: absolute;
  left: 40px;
  top: 51px;
  width: 19px;
  height: 19px;
  background: #fff;
  transform: rotate(45deg);
}
.search {
  display: flex;
  align-items: center;
  height: 56px;
  margin: 30px 0 20px;
  padding: 0 0 1px 19px;
  border: 2px solid #dcdfe6;
  border-radius: 4px;
  font-size: 24px;
  color: #a8abb2;
}
.search svg {
  width: 29px;
  height: 29px;
  margin-right: 14px;
  color: #909399;
  stroke-width: 4;
}
.group {
  margin-bottom: 20px;
  padding: 0 28px 38px 20px;
  background: #fafbfd;
  border-top: 2px solid #e9ecf4;
}
.group-head {
  display: flex;
  align-items: center;
  justify-content: space-between;
  height: 92px;
  padding-bottom: 10px;
}
.group + .group {
  border-top-color: #fafbfd;
}
.group-head h3 {
  font-size: 28px;
  font-weight: 700;
}
.group-head svg {
  width: 20px;
  height: 12px;
  margin-top: 6px;
  color: #606b7a;
  stroke-width: 4;
}
.props {
  display: grid;
  grid-template-columns: 412px 1fr;
  row-gap: 20px;
  font-family: "DejaVu Sans Mono", monospace;
  font-size: 24px;
  line-height: 36px;
}
.props dt {
  color: #909399;
}
.props u {
  text-decoration: none;
  padding-bottom: 1px;
  border-bottom: 2px dotted #360080;
}
.props a {
  color: #2a6ca8;
  font-weight: 700;
}
.props svg {
  display: inline-block;
  width: 30px;
  height: 28px;
  margin-right: 23px;
  vertical-align: -8px;
  color: #2a6ca8;
}
.props svg.tight {
  margin-right: 8px;
}
.second-line {
  display: flex;
  align-items: center;
  height: 48px;
}
.key-btn {
  width: 318px;
  height: 48px;
  margin-left: 24px;
  padding: 0;
  background: #f4f4f5;
  border: 2px solid #c8c9cc;
  border-radius: 4px;
  color: #909399;
}
```
